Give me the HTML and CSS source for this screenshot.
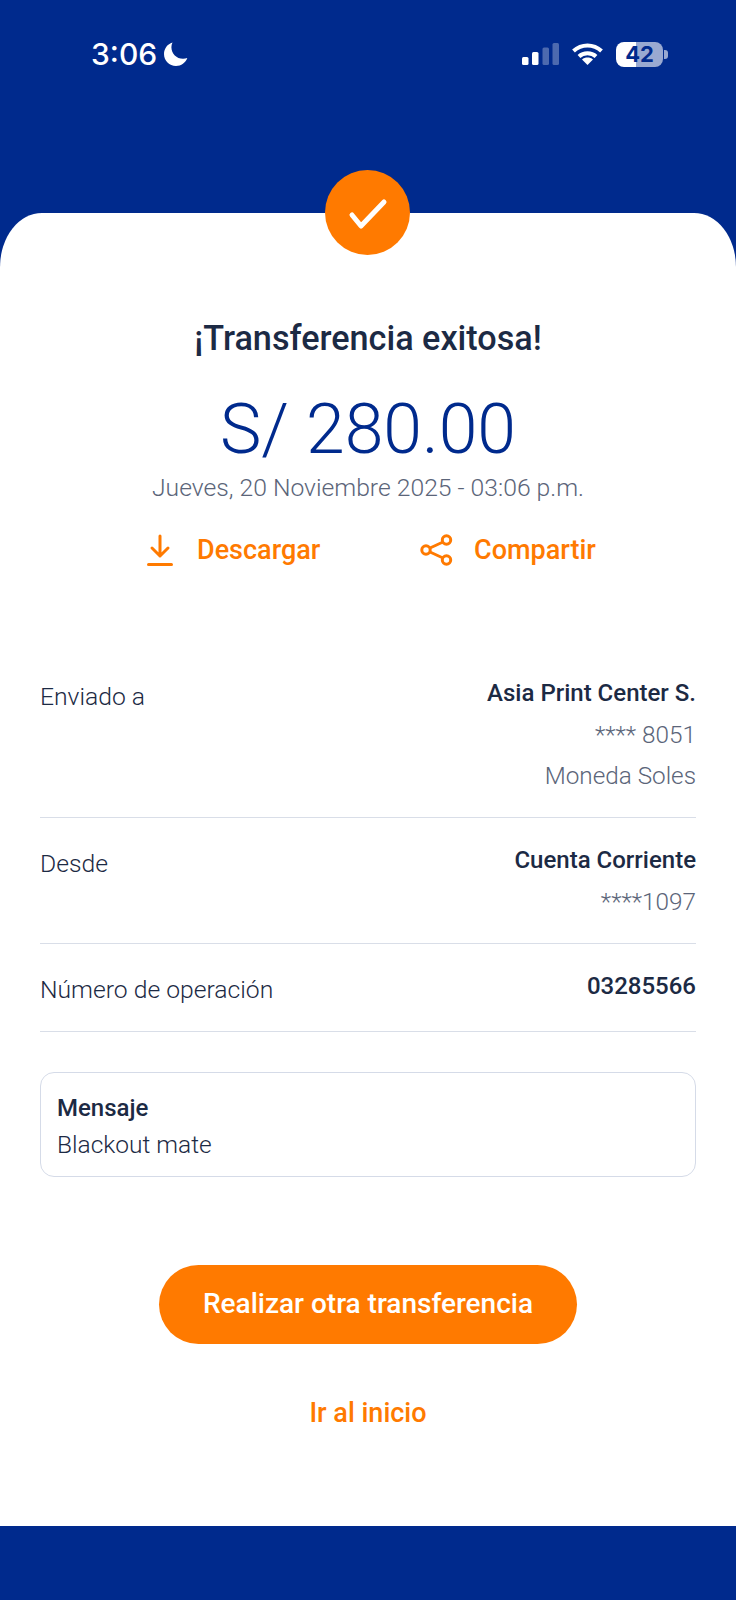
FILE: index.html
```html
<!DOCTYPE html>
<html lang="es">
<head>
    <meta charset="UTF-8">
    <title>Transferencia exitosa</title>
    <meta name="viewport" content="width=device-width, initial-scale=1">
    <link rel="stylesheet" href="styles.css">
</head>
<body>
<div class="statusbar">
    <div class="status-left">
        <span class="time">3:06</span>
        <svg class="moon" width="24" height="24" viewBox="0 0 24 24"><path d="M8.500.5C3.500 2 0 6.600 0 12c0 6.600 5.400 12 12 12 5.200 0 9.600-3.300 11.300-8-1.300.5-2.700.8-4.300.8-6.400 0-11.600-5.200-11.600-11.600 0-1.700.4-3.300 1.100-4.700z" fill="#fff"/></svg>
    </div>
    <div class="status-right">
        <svg class="signal" width="37" height="22" viewBox="0 0 37 22">
            <rect x="0" y="14" width="6.500" height="8" rx="1.500" fill="#fff"/>
            <rect x="10" y="9" width="6.500" height="13" rx="1.500" fill="#fff"/>
            <rect x="20.500" y="4.500" width="6.500" height="17.500" rx="1.500" fill="#fff" opacity=".3"/>
            <rect x="30.500" y="0" width="6.500" height="22" rx="1.500" fill="#fff" opacity=".3"/>
        </svg>
        <svg class="wifi" width="31" height="22" viewBox="0 0 31 22" fill="none" stroke="#fff" stroke-width="4">
            <path d="M1.500 8C9.500 .5 21.500 .5 29.500 8"/>
            <path d="M7 13.500C11.500 9.300 19.500 9.300 24 13.500"/>
            <path d="M15.500 22l-5.500-5.500c3-2.600 8-2.600 11 0z" fill="#fff" stroke="none"/>
        </svg>
        <div class="battery">
            <div class="battery-body"><span>42</span></div>
            <div class="battery-tip"></div>
        </div>
    </div>
</div>

<div class="card">
    <div class="check">
        <svg width="42" height="34" viewBox="0 0 42 34" fill="none" stroke="#fff" stroke-width="5" stroke-linecap="round" stroke-linejoin="round"><path d="M5 19l9 11L37 6"/></svg>
    </div>

    <h1 class="title">¡Transferencia exitosa!</h1>
    <div class="amount">S/ 280.00</div>
    <div class="date">Jueves, 20 Noviembre 2025 - 03:06 p.m.</div>

    <div class="actions">
        <a class="action action-down">
            <svg width="26" height="32" viewBox="0 0 26 32" fill="none" stroke="#ff7a00" stroke-width="3" stroke-linecap="round" stroke-linejoin="round"><path d="M13 2v20M5 14l8 8 8-8"/><path d="M1.500 30.500h23"/></svg>
            <span>Descargar</span>
        </a>
        <a class="action action-share">
            <svg width="33" height="32" viewBox="0 0 33 32" fill="none" stroke="#ff7a00" stroke-width="3"><circle cx="26.500" cy="6" r="4.200"/><circle cx="6" cy="16" r="4.200"/><circle cx="26.500" cy="26" r="4.200"/><path d="M10 14l13-6M10 18l13 6"/></svg>
            <span>Compartir</span>
        </a>
    </div>

    <div class="details">
        <div class="row">
            <div class="label">Enviado a</div>
            <div class="values">
                <div class="strong">Asia Print Center S.</div>
                <div class="muted">**** 8051</div>
                <div class="muted">Moneda Soles</div>
            </div>
        </div>
        <div class="row">
            <div class="label">Desde</div>
            <div class="values">
                <div class="strong">Cuenta Corriente</div>
                <div class="muted">****1097</div>
            </div>
        </div>
        <div class="row">
            <div class="label">Número de operación</div>
            <div class="values">
                <div class="strong">03285566</div>
            </div>
        </div>
    </div>

    <div class="message">
        <div class="message-title">Mensaje</div>
        <div class="message-text">Blackout mate</div>
    </div>

    <a class="btn">Realizar otra transferencia</a>
    <a class="link">Ir al inicio</a>
</div>

<div class="footer"></div>
</body>
</html>
```

FILE: styles.css
```css
* {
    box-sizing: border-box;
}

html, body {
    margin: 0;
    padding: 0;
}

body {
    width: 736px;
    height: 1600px;
    background-color: #002a8d;
    font-family: Roboto, "Noto Sans", sans-serif;
    color: #1c2a44;
    overflow: hidden;
}

/* status bar */
.statusbar {
    height: 213px;
    padding: 33px 68px 0 91px;
    display: flex;
    justify-content: space-between;
    align-items: flex-start;
    color: #fff;
}

.status-left {
    display: flex;
    align-items: center;
    gap: 7px;
}

.time {
    font-family: Inter, sans-serif;
    font-size: 30px;
    font-weight: 500;
    line-height: 42px;
}

.status-right {
    display: flex;
    align-items: center;
    gap: 13px;
    height: 42px;
}

.battery {
    display: flex;
    align-items: center;
    gap: 1px;
}

.battery-body {
    width: 47px;
    height: 25px;
    border-radius: 8px;
    background: linear-gradient(90deg, #fff 0, #fff 43%, #99a9d1 43%, #99a9d1 100%);
    color: #002a8d;
    font-family: Inter, sans-serif;
    font-size: 22px;
    font-weight: 700;
    line-height: 25px;
    text-align: center;
}

.battery-tip {
    width: 4px;
    height: 9px;
    border-radius: 0 3px 3px 0;
    background-color: #99a9d1;
}

/* card */
.card {
    position: relative;
    height: 1313px;
    padding: 0 40px;
    background-color: #fff;
    border-radius: 42px 42px 0 0 / 54px 54px 0 0;
    display: flex;
    flex-direction: column;
    align-items: center;
}

.check {
    position: absolute;
    top: -43px;
    left: 325px;
    width: 85px;
    height: 85px;
    border-radius: 50%;
    background-color: #ff7a00;
    display: flex;
    align-items: center;
    justify-content: center;
}

.title {
    margin: 104px 0 0;
    font-size: 34.200px;
    font-weight: 500;
    line-height: 42px;
}

.amount {
    margin-top: 30px;
    font-size: 69.700px;
    font-weight: 300;
    line-height: 80px;
    color: #002a8d;
}

.date {
    margin-top: 3px;
    font-size: 24.700px;
    font-weight: 300;
    line-height: 32px;
    color: #5b6579;
}

.actions {
    margin-top: 26px;
    width: 100%;
    display: flex;
    padding-left: 107px;
}

.action {
    display: flex;
    align-items: center;
    font-size: 27px;
    font-weight: 500;
    color: #ff7a00;
    height: 40px;
}

.action-down {
    gap: 24px;
    width: 273px;
}

.action-share {
    gap: 21px;
}

/* details */
.details {
    width: 100%;
    margin-top: 81px;
}

.row {
    display: flex;
    justify-content: space-between;
    border-bottom: 1px solid #d9dee8;
    padding: 22px 0 21px;
}

.label {
    font-size: 24.700px;
    font-weight: 300;
    line-height: 41px;
    padding-top: 3px;
}

.values {
    text-align: right;
}

.strong {
    font-size: 24px;
    font-weight: 500;
    line-height: 41px;
}

.muted {
    font-size: 24.300px;
    font-weight: 300;
    line-height: 41px;
    color: #5b6579;
}

/* mensaje */
.message {
    width: 100%;
    height: 105px;
    margin-top: 40px;
    padding: 17px 16px 0;
    border: 1.500px solid #d5dbe8;
    border-radius: 14px;
}

.message-title {
    font-size: 24px;
    font-weight: 500;
    line-height: 36px;
}

.message-text {
    font-size: 24.500px;
    font-weight: 300;
    line-height: 37px;
}

/* botones */
.btn {
    margin-top: 88px;
    width: 418px;
    height: 79px;
    padding-bottom: 3px;
    border-radius: 40px;
    background-color: #ff7a00;
    color: #fff;
    font-size: 28px;
    font-weight: 500;
    display: flex;
    align-items: center;
    justify-content: center;
}

.link {
    margin-top: 49px;
    font-size: 27px;
    font-weight: 500;
    line-height: 40px;
    color: #ff7a00;
}

.footer {
    height: 74px;
    background-color: #002a8d;
}
```
